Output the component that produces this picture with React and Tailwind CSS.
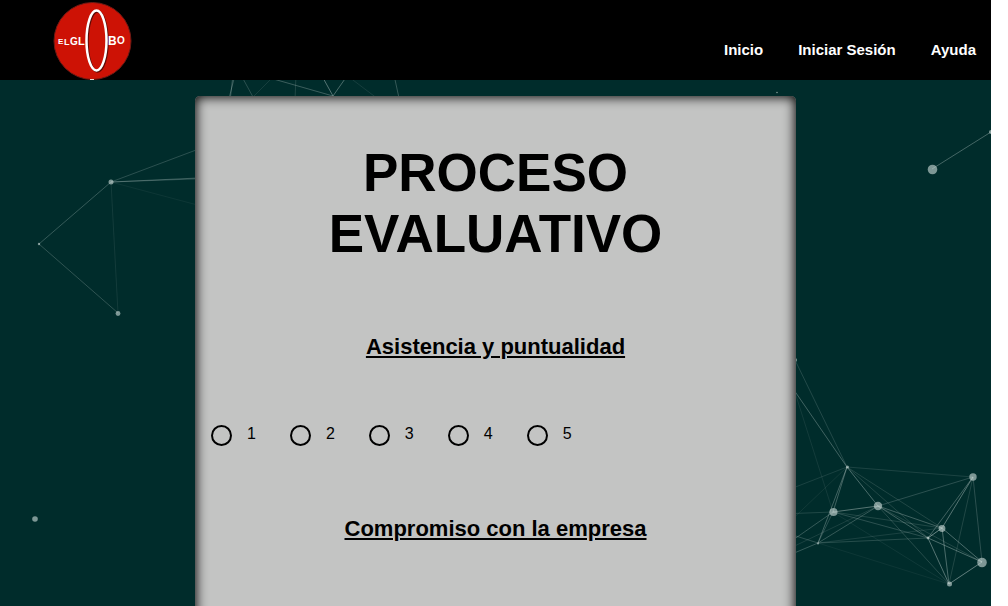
const nodes = [
  [111, 102, 2.5], [39, 164, 1.2], [118, 233.5, 2.4], [35, 439, 2.8],
  [932.5, 89.5, 4.8], [991, 52, 2], [777, 12.5, 0.8],
  [795, 280, 2], [794, 307, 2],
  [847.5, 387, 1.5], [833.5, 432, 4], [878, 426, 4.2], [973, 397, 3.7],
  [942, 448.5, 3.4], [928, 458, 1.4], [982, 482.5, 4.8], [949.5, 504, 2.5], [818, 463.5, 1],
];

const links = [
  [111, 102, 39, 164, 0.25], [39, 164, 118, 233, 0.22], [111, 102, 118, 233, 0.09],
  [111, 102, 220, 61, 0.2], [111, 102, 220, 97, 0.25], [111, 102, 220, 98, 0.2], [111, 102, 220, 131, 0.06],
  [235, -5, 226, 30, 0.25], [233, -5, 229, 30, 0.25], [241, -5, 253, 17, 0.2], [253, 17, 275, -5, 0.1],
  [270, -2, 333, 16, 0.28], [322, -4, 333, 16, 0.4], [333, 16, 347, -4, 0.35],
  [296, -5, 295, 20, 0.15], [349, -3, 378, 19, 0.1], [394, -5, 399, 18, 0.25],
  [932, 89, 991, 52, 0.32],
  [795, 280, 847, 387, 0.16], [785, 297, 847, 387, 0.3], [792, 303, 833, 432, 0.09],
  [847, 387, 973, 397, 0.13], [847, 387, 780, 413, 0.12], [847, 387, 780, 451, 0.08],
  [847, 387, 833, 432, 0.3], [847, 387, 818, 463, 0.3], [847, 387, 878, 426, 0.35],
  [847, 387, 942, 448, 0.15], [847, 387, 928, 458, 0.15],
  [833, 432, 878, 426, 0.4], [833, 432, 780, 434, 0.15], [833, 432, 780, 469, 0.25],
  [833, 432, 818, 463, 0.2], [833, 432, 942, 448, 0.15], [833, 432, 928, 458, 0.2], [833, 432, 949, 504, 0.07],
  [878, 426, 973, 397, 0.2], [878, 426, 942, 448, 0.3], [878, 426, 928, 458, 0.3],
  [878, 426, 982, 482, 0.15], [878, 426, 949, 504, 0.18], [878, 426, 818, 463, 0.25], [878, 426, 780, 473, 0.12],
  [818, 463, 780, 451, 0.2], [818, 463, 780, 479, 0.25], [818, 463, 928, 458, 0.18],
  [818, 463, 942, 448, 0.12], [818, 463, 949, 504, 0.06],
  [973, 397, 942, 448, 0.4], [973, 397, 928, 458, 0.3], [973, 397, 949, 504, 0.15], [973, 397, 982, 482, 0.2],
  [942, 448, 928, 458, 0.5], [942, 448, 982, 482, 0.35], [942, 448, 949, 504, 0.35],
  [928, 458, 982, 482, 0.35], [928, 458, 949, 504, 0.4], [949, 504, 982, 482, 0.45],
];

function Particles() {
  return (
    <svg className="absolute inset-0 h-full w-full" viewBox="0 0 991 526" preserveAspectRatio="xMidYMin slice" aria-hidden="true">
      {links.map(([x1, y1, x2, y2, o], i) => (
        <line key={i} x1={x1} y1={y1} x2={x2} y2={y2} stroke="#d5e2df" strokeOpacity={o} />
      ))}
      {nodes.map(([cx, cy, r], i) => (
        <circle key={i} cx={cx} cy={cy} r={r} fill="#c9dad7" fillOpacity="0.62" />
      ))}
    </svg>
  );
}

function Logo() {
  return (
    <svg width="80" height="80" viewBox="0 0 80 80" aria-hidden="true">
      <circle cx="39.5" cy="41" r="38.5" fill="#cd1205" stroke="#6f1a14" strokeWidth="1" />
      <ellipse cx="44.5" cy="41.5" rx="10" ry="30" fill="none" stroke="#5c0a05" strokeWidth="2.5" />
      <ellipse cx="43.5" cy="40.5" rx="10" ry="30" fill="none" stroke="#fff" strokeWidth="2.5" />
      <g fill="#fff" fontWeight="700" fontFamily="'Liberation Sans', Arial, sans-serif">
        <text x="5" y="44" fontSize="8">E</text>
        <text x="11" y="45" fontSize="9">L</text>
        <text x="17" y="45" fontSize="10">G</text>
        <text x="25" y="45" fontSize="11">L</text>
        <text x="55" y="45" fontSize="12">B</text>
        <text x="64" y="44" fontSize="10">O</text>
      </g>
      <rect x="37" y="79" width="4" height="1" fill="#e8dcd8" />
    </svg>
  );
}

function Rating({ name, title }) {
  return (
    <fieldset className="w-full">
      <legend className="w-full text-center text-[22px] leading-[26px] font-bold underline">{title}</legend>
      <div className="mt-[61px] mb-[69px] flex gap-[34px] px-4">
        {[1, 2, 3, 4, 5].map((n) => (
          <label key={n} className="flex h-[26px] items-center gap-[15px] text-base leading-[22px]">
            <input
              type="radio"
              name={name}
              value={n}
              className="mt-0.5 h-[21px] w-[21px] appearance-none rounded-full border-2 border-black checked:bg-black"
            />
            {n}
          </label>
        ))}
      </div>
    </fieldset>
  );
}

export default function App() {
  return (
    <div className="flex h-screen flex-col overflow-hidden bg-white pr-[17px] font-['Liberation_Sans',Arial,sans-serif] text-black">
      <header className="flex h-20 shrink-0 items-center justify-between bg-black pr-[15px] pl-[53px]">
        <a href="#inicio" aria-label="El Globo">
          <Logo />
        </a>
        <nav className="flex gap-[35px] pt-5 text-[15px] leading-5 font-bold text-white">
          <a href="#inicio">Inicio</a>
          <a href="#sesion">Iniciar Sesión</a>
          <a href="#ayuda">Ayuda</a>
        </nav>
      </header>
      <main className="relative flex flex-1 justify-center overflow-hidden bg-[#002c2b] pt-4">
        <Particles />
        <form className="relative h-[800px] w-full max-w-[601px] rounded-[5px] bg-[#c3c4c3] pt-[46px] shadow-[inset_0_0_12px_1px_#000]">
          <h1 className="mx-auto max-w-[400px] text-center text-[53px] leading-[61px] font-bold">PROCESO EVALUATIVO</h1>
          <div className="mt-[70px]">
            <Rating name="asistencia" title="Asistencia y puntualidad" />
            <Rating name="compromiso" title="Compromiso con la empresa" />
          </div>
        </form>
      </main>
    </div>
  );
}
